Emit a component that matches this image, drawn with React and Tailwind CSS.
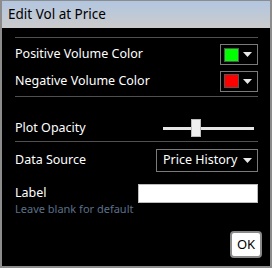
export default function App() {
  const font = { fontFamily: '"Noto Sans", "Open Sans", sans-serif' };
  return (
    <div className="w-[274px] h-[270px] bg-white" style={font}>
      <div className="w-[272px] h-[268px] border-2 border-t border-[#8c8c8c] flex flex-col bg-black">
        <div className="h-[27px] shrink-0 bg-gradient-to-b from-[#b2c6e0] to-[#cbcbcb] pl-[6px] flex items-center text-[13.5px] text-black">
          Edit Vol at Price
        </div>
        <div className="flex-1 flex flex-col pl-[13px] pr-[12px] text-white text-[12.5px]">
          <div className="mt-[9px] h-px bg-[#505050]" />
          <div className="mt-[6px] h-[21px] flex items-center justify-between">
            <span>Positive Volume Color</span>
            <ColorBtn color="#00ff00" />
          </div>
          <div className="mt-[5px] h-[22px] flex items-center justify-between">
            <span>Negative Volume Color</span>
            <ColorBtn color="#ff0000" />
          </div>
          <div className="mt-[4px] h-px bg-[#505050]" />
          <div className="mt-[21px] h-[20px] flex items-center justify-between">
            <span>Plot Opacity</span>
            <div className="relative w-[91px] h-[18px] mr-[4px] flex items-center">
              <div className="w-full h-[3px] bg-[#e6e6e6]" />
              <div className="absolute left-[28px] top-0 w-[10px] h-[18px] bg-[#f0f0f0] border border-[#bcbcbc]" />
            </div>
          </div>
          <div className="mt-[3px] h-px bg-[#505050]" />
          <div className="mt-[7px] h-[23px] flex items-center justify-between">
            <span>Data Source</span>
            <div className="w-[102px] h-[23px] border border-[#7a7a7a] flex items-center pl-[6px] pr-[5px] justify-between">
              <span>Price History</span>
              <Arrow />
            </div>
          </div>
          <div className="mt-[12px] h-[19px] flex items-center justify-between">
            <span>Label</span>
            <div className="w-[120px] h-[19px] bg-white border border-[#bcbcbc]" />
          </div>
          <div className="-mt-[1px] text-[11px] leading-[13px] text-[#5b708a]">Leave blank for default</div>
          <div className="flex justify-end mt-[16px] -mr-[4px]">
            <div className="w-[32px] h-[27px] rounded-[4px] bg-white border-2 border-[#8a8a8a] flex items-center justify-center text-black text-[13px]">
              OK
            </div>
          </div>
        </div>
      </div>
    </div>
  );
}

function Arrow() {
  return (
    <svg width="9" height="5" viewBox="0 0 9 5">
      <polygon points="0,0 9,0 4.5,5" fill="#e8e8e8" />
    </svg>
  );
}

function ColorBtn({ color }) {
  return (
    <div className="w-[38px] h-[21px] border border-[#7a7a7a] flex items-center pl-[3px] pr-[5px] justify-between">
      <div className="w-[15px] h-[14px] border border-[#555]" style={{ background: color }} />
      <Arrow />
    </div>
  );
}
